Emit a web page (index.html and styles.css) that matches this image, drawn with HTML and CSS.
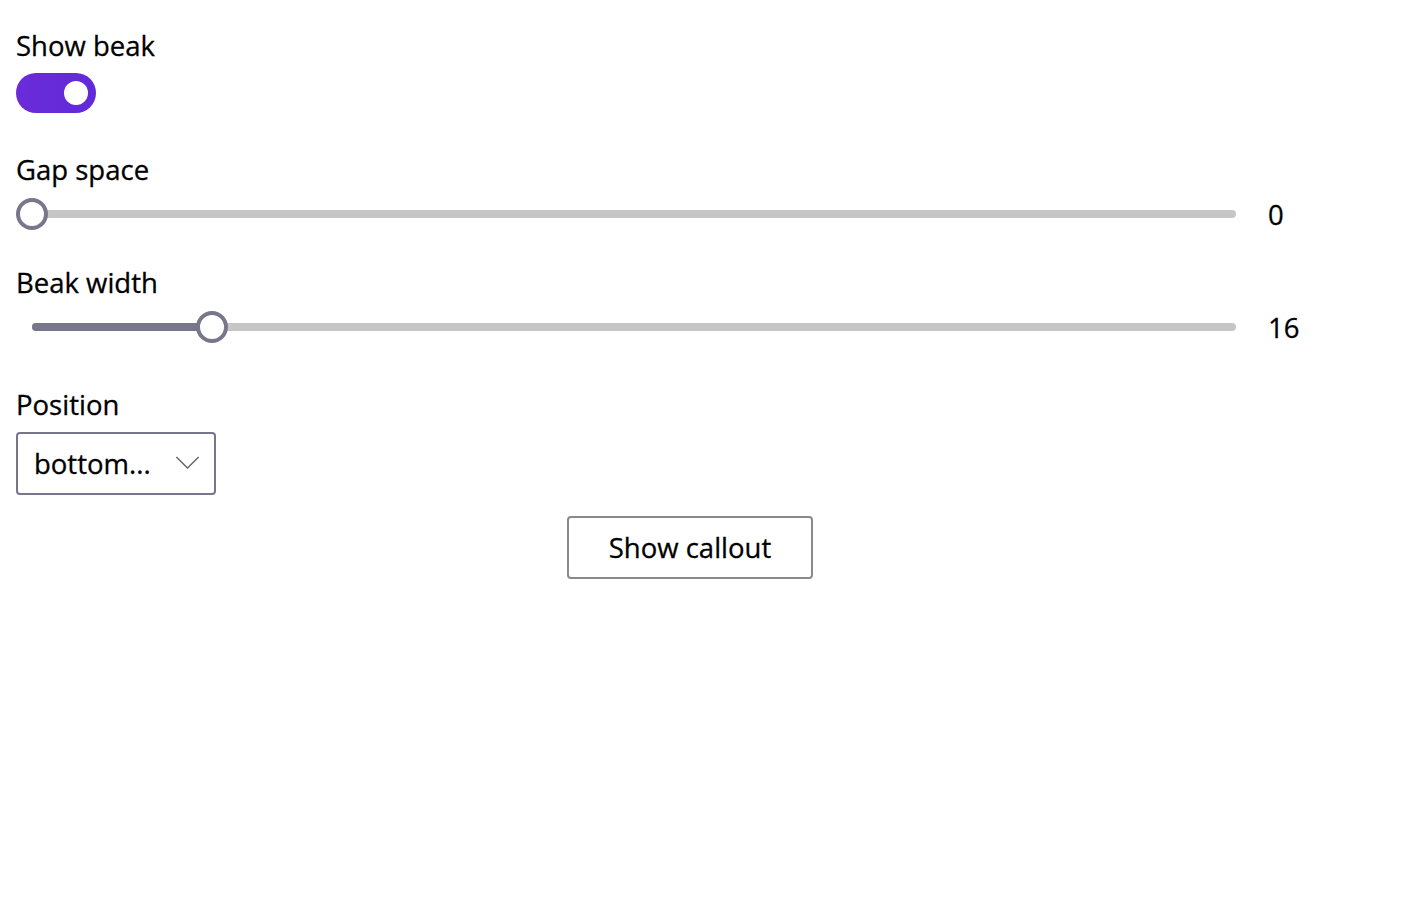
FILE: index.html
```html
<!DOCTYPE html>
<html lang="en">
<head>
<meta charset="utf-8">
<title>Callout options</title>
<link rel="stylesheet" href="styles.css">
</head>
<body>
<main class="page">
  <div class="field">
    <label class="label">Show beak</label>
    <div class="toggle toggle-on" role="switch" aria-checked="true"><span class="toggle-thumb"></span></div>
  </div>

  <div class="field field-gap">
    <label class="label">Gap space</label>
    <div class="slider-row">
      <div class="slider">
        <div class="rail"></div>
        <div class="rail-fill" style="width:0px"></div>
        <div class="thumb" style="left:0px"></div>
      </div>
      <span class="value">0</span>
    </div>
  </div>

  <div class="field field-beak">
    <label class="label">Beak width</label>
    <div class="slider-row">
      <div class="slider">
        <div class="rail"></div>
        <div class="rail-fill" style="width:180px"></div>
        <div class="thumb" style="left:180px"></div>
      </div>
      <span class="value">16</span>
    </div>
  </div>

  <div class="field field-pos">
    <label class="label">Position</label>
    <button class="dropdown" type="button">
      <span class="dropdown-text">bottom...</span>
      <svg class="chevron" width="26" height="14" viewBox="0 0 26 14" aria-hidden="true">
        <polyline points="1,1 13,13 25,1" fill="none" stroke="#616161" stroke-width="1.4"/>
      </svg>
    </button>
  </div>

  <div class="actions">
    <button class="btn" type="button">Show callout</button>
  </div>
</main>
</body>
</html>
```

FILE: styles.css
```css
* { box-sizing: border-box; }

html, body {
  margin: 0;
  padding: 0;
  background: #ffffff;
}

body {
  font-family: "Open Sans", "Noto Sans", "Liberation Sans", sans-serif;
  font-size: 27.5px;
  font-weight: 400;
  -webkit-text-stroke: 0.3px #000000;
  line-height: 40px;
  color: #000000;
}

.page {
  width: 1364px;
  padding: 26px 0 0 16px;
  display: flex;
  flex-direction: column;
}

.field {
  display: flex;
  flex-direction: column;
  align-items: flex-start;
}

.label {
  display: block;
  height: 40px;
  line-height: 40px;
}

.field-gap { margin-top: 37px; }
.field-beak { margin-top: 28px; }
.field-pos { margin-top: 37px; }

/* toggle */
.toggle {
  margin-top: 7px;
  width: 80px;
  height: 40px;
  border-radius: 20px;
  background: linear-gradient(90deg, #6b2bd8 0%, #612ad9 100%);
  display: flex;
  align-items: center;
  justify-content: flex-end;
  padding-right: 8px;
}

.toggle-thumb {
  width: 24px;
  height: 24px;
  border-radius: 50%;
  background: #ffffff;
}

/* sliders */
.slider-row {
  margin-top: 3px;
  display: flex;
  align-items: center;
  width: 100%;
}

.slider {
  position: relative;
  width: 1236px;
  height: 40px;
  flex: none;
}

.rail {
  position: absolute;
  left: 16px;
  right: 16px;
  top: 16px;
  height: 8px;
  border-radius: 4px;
  background: #c6c6c6;
}

.rail-fill {
  position: absolute;
  left: 16px;
  top: 16px;
  height: 8px;
  border-radius: 4px 0 0 4px;
  background: #77778b;
}

.thumb {
  position: absolute;
  top: 4px;
  width: 32px;
  height: 32px;
  border-radius: 50%;
  background: #ffffff;
  border: 4.5px solid #77778b;
}

.value {
  margin-left: 16px;
  line-height: 40px;
  padding-top: 2px;
}

/* dropdown */
.dropdown {
  margin-top: 7px;
  width: 200px;
  height: 63px;
  border: 2px solid #76768a;
  border-radius: 4px;
  background: #ffffff;
  display: flex;
  align-items: center;
  justify-content: space-between;
  padding: 0 14px 0 16px;
  font: inherit;
  color: inherit;
  line-height: 40px;
  cursor: pointer;
}

.dropdown-text {
  white-space: nowrap;
}

.chevron {
  display: block;
  width: 25px;
  height: 13px;
  margin-top: -2px;
}

/* button */
.actions {
  margin-top: 21px;
  display: flex;
  justify-content: center;
}

.btn {
  width: 246px;
  height: 63px;
  border: 2px solid #8a8a8a;
  border-radius: 4px;
  background: #ffffff;
  font: inherit;
  color: inherit;
  line-height: 40px;
  padding: 0;
  cursor: pointer;
}
```
